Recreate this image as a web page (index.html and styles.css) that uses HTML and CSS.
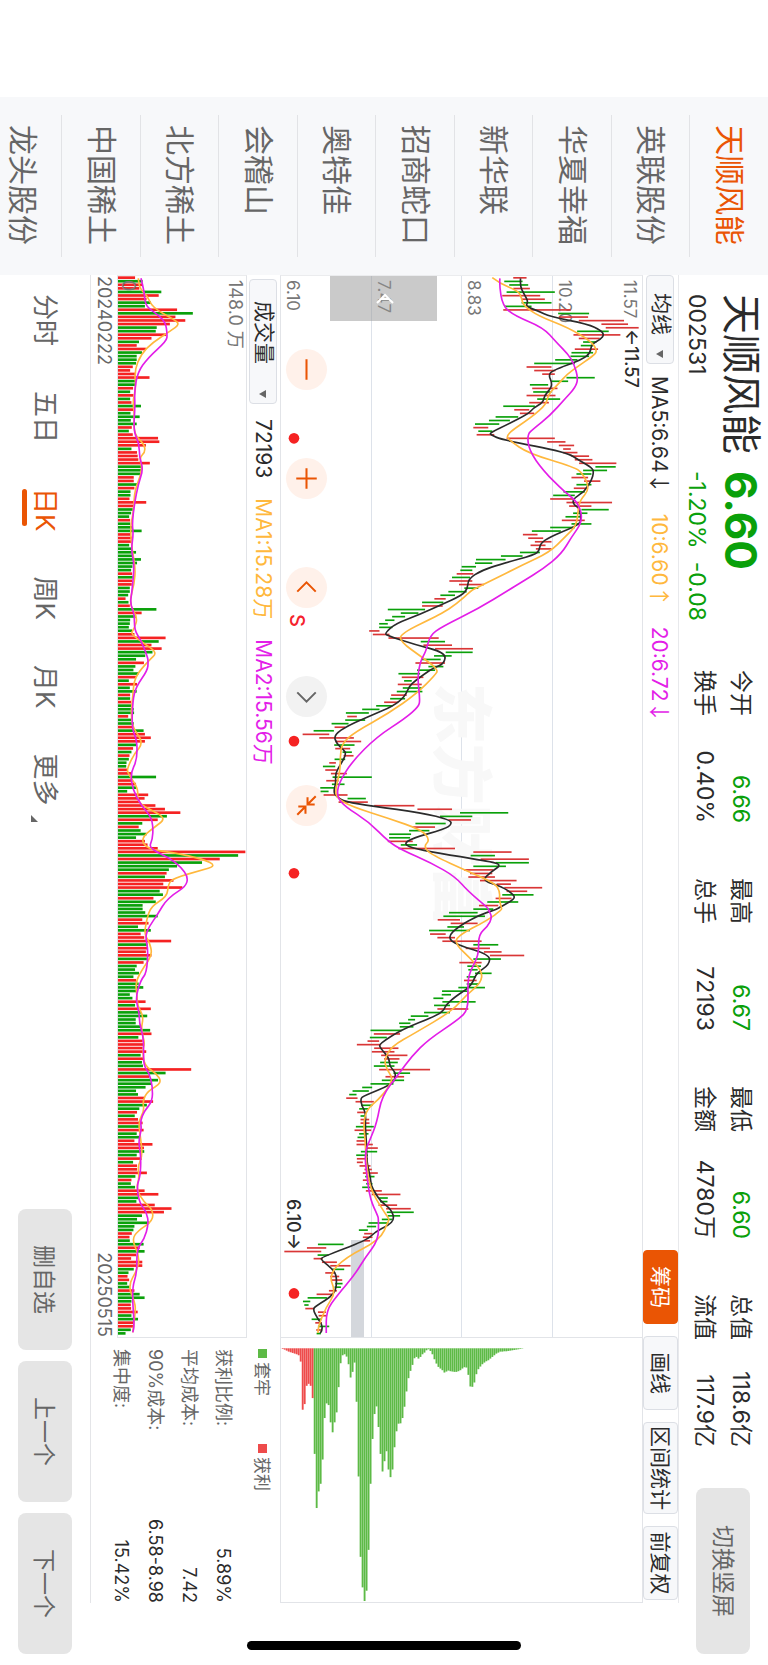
FILE: index.html
```
<!DOCTYPE html>
<html lang="zh-CN">
<head>
    <meta charset="UTF-8">
    <meta name="viewport" content="width=device-width, initial-scale=1.0">
    <title>天顺风能 002531</title>
    <link rel="stylesheet" href="styles.css">
</head>
<body>
    <div class="screen">
        <nav class="stock-list">
            <ul>
                <li><a href="#" class="active">天顺风能</a></li>
                <li><a href="#">英联股份</a></li>
                <li><a href="#">华夏幸福</a></li>
                <li><a href="#">新华联</a></li>
                <li><a href="#">招商蛇口</a></li>
                <li><a href="#">奥特佳</a></li>
                <li><a href="#">会稽山</a></li>
                <li><a href="#">北方稀土</a></li>
                <li><a href="#">中国稀土</a></li>
                <li><a href="#">龙头股份</a></li>
            </ul>
        </nav>

        <main class="main">
            <header class="header">
                <div class="quote">
                    <h1>天顺风能</h1>
                    <strong class="price">6.60</strong>
                    <span class="code">002531</span>
                    <span class="change"><span>-1.20%</span><span>-0.08</span></span>
                </div>
                <div class="stats">
                    <dl>
                        <dt>今开</dt><dd class="down">6.66</dd>
                        <dt>换手</dt><dd>0.40%</dd>
                    </dl>
                    <dl>
                        <dt>最高</dt><dd class="down">6.67</dd>
                        <dt>总手</dt><dd>72193</dd>
                    </dl>
                    <dl>
                        <dt>最低</dt><dd class="down">6.60</dd>
                        <dt>金额</dt><dd>4780万</dd>
                    </dl>
                    <dl>
                        <dt>总值</dt><dd>118.6亿</dd>
                        <dt>流值</dt><dd>117.9亿</dd>
                    </dl>
                </div>
                <button class="btn btn-rotate">切换竖屏</button>
            </header>

            <section class="charts">
                <div class="toolbar">
                    <label class="picker">
                        <select aria-label="主图指标"><option>均线</option></select>
                    </label>
                    <div class="values">
                        <span>MA5:6.64<i>↓</i></span>
                        <span class="orange">10:6.60<i>↑</i></span>
                        <span class="purple">20:6.72<i>↓</i></span>
                    </div>
                    <div class="tools">
                        <button class="tool active">筹码</button>
                        <button class="tool">画线</button>
                        <button class="tool">区间统计</button>
                        <button class="tool">前复权</button>
                    </div>
                </div>

                <div class="kline">
                    <div class="grid">
                        <div><span>11.57</span><span>10.20</span></div>
                        <div><span>8.83</span></div>
                        <div><span>7.47</span></div>
                        <div><span>6.10</span></div>
                    </div>
                    <div class="watermark">东方财富</div>
                    <div class="gap-zone"></div>
                    <div class="controls">
                        <button aria-label="缩小"><svg viewBox="0 0 40 40"><path d="M10 20h20"/></svg></button>
                        <button aria-label="放大"><svg viewBox="0 0 40 40"><path d="M10 20h20M20 10v20"/></svg></button>
                        <button aria-label="左移"><svg viewBox="0 0 40 40"><path d="M24 11l-9 9 9 9"/></svg></button>
                        <button aria-label="右移" class="grey"><svg viewBox="0 0 40 40"><path d="M16 11l9 9-9 9"/></svg></button>
                        <button aria-label="收起"><svg viewBox="0 0 40 40"><path d="M11 11l8 8M19 12v7h-7M29 29l-8-8M21 28v-7h7"/></svg></button>
                    </div>
                    <svg class="plot" id="kline" viewBox="0 0 3189 1085" preserveAspectRatio="none"></svg>
                    <button class="handle" aria-label="展开"><svg viewBox="0 0 16 18"><path d="M12 1L4 9l8 8M8 5v8"/></svg></button>
                    <span class="mark mark-high">←11.57</span>
                    <span class="mark mark-low">6.10→</span>
                    <span class="mark mark-sell">S</span>
                </div>

                <div class="chips">
                    <svg class="plot" id="chips" viewBox="0 0 795 1085" preserveAspectRatio="none"></svg>
                </div>

                <div class="toolbar volume-bar">
                    <label class="picker picker-wide">
                        <select aria-label="副图指标"><option>成交量</option></select>
                    </label>
                    <div class="values">
                        <span>72193</span>
                        <span class="orange">MA1:15.28万</span>
                        <span class="purple">MA2:15.56万</span>
                    </div>
                </div>

                <div class="legend">
                    <span class="trapped">套牢</span>
                    <span class="profit">获利</span>
                </div>

                <div class="volume">
                    <svg class="plot" id="volume" viewBox="0 0 3189 390" preserveAspectRatio="none"></svg>
                    <span class="vol-max">148.0 万</span>
                    <span class="vol-min">0</span>
                </div>

                <dl class="chip-info">
                    <dt>获利比例:</dt><dd>5.89%</dd>
                    <dt>平均成本:</dt><dd>7.42</dd>
                    <dt>90%成本:</dt><dd>6.58-8.98</dd>
                    <dt>集中度:</dt><dd>15.42%</dd>
                </dl>

                <div class="dates"><span>20240222</span><span>20250515</span></div>
            </section>

            <footer class="footer">
                <nav class="periods">
                    <a href="#">分时</a>
                    <a href="#">五日</a>
                    <a href="#" class="active">日K</a>
                    <a href="#">周K</a>
                    <a href="#">月K</a>
                    <a href="#" class="more">更多</a>
                </nav>
                <div class="actions">
                    <button class="btn">删自选</button>
                    <button class="btn">上一个</button>
                    <button class="btn">下一个</button>
                </div>
            </footer>
        </main>

        <div class="home-indicator"></div>
    </div>
    <script src="script.js"></script>
</body>
</html>
```
FILE: styles.css
```
* {
    box-sizing: border-box;
    margin: 0;
    padding: 0;
}

html, body {
    height: 100%;
    overflow: hidden;
    background: #fff;
}

body, button, select {
    font-family: Inter, "Noto Sans CJK SC", sans-serif;
    color: #2b2b2b;
}

button {
    border: none;
    cursor: pointer;
}

a {
    color: #666;
    text-decoration: none;
}

/* 横屏页面，顺时针转 90 度显示 */
.screen {
    position: relative;
    display: flex;
    width: 100vh;
    height: 100vw;
    padding-left: 97px;
    transform: translateX(100vw) rotate(90deg);
    transform-origin: 0 0;
}

/* 左侧股票列表 */
.stock-list {
    flex: 0 0 178px;
    background: #f7f8fa;
    overflow: hidden;
}

.stock-list ul {
    display: grid;
    grid-template-rows: repeat(9, 9fr) 7fr;
    height: 100%;
    padding: 0 18px;
    list-style: none;
}

.stock-list li {
    min-height: 0;
    padding: 17px 0 0 10px;
    border-bottom: 1px solid #e2e3e6;
    font-size: 30px;
    line-height: 42px;
    white-space: nowrap;
}

.stock-list li:last-child {
    border-bottom: none;
}

.stock-list .active {
    color: #ea5504;
}

.main {
    flex: 1;
    min-width: 0;
    display: flex;
    flex-direction: column;
}

/* 顶部行情 */
.header {
    flex: 0 0 89px;
    display: flex;
    align-items: center;
    padding: 0 11px 0 19px;
    font-size: 23px;
}

.quote {
    display: grid;
    grid-template-columns: 160px auto;
    grid-template-rows: 44px 40px;
    column-gap: 17px;
    align-items: center;
    align-self: flex-start;
    flex: 0 0 376px;
    justify-content: start;
    padding-top: 5px;
    line-height: 36px;
}

.quote h1 {
    font-size: 40px;
    font-weight: 400;
    line-height: 40px;
    white-space: nowrap;
}

.price {
    font-size: 44px;
    color: #0aa00a;
}

.code, .change {
    align-self: end;
}

.change {
    display: flex;
    gap: 13px;
    color: #0aa00a;
}

.stats {
    flex: 1;
    display: flex;
    gap: 55px;
}

.stats dl {
    flex: 0 0 153px;
    display: grid;
    grid-template-columns: auto 1fr;
    line-height: 36px;
}

.stats dd {
    text-align: right;
}

.down {
    color: #0aa00a;
}

.btn {
    width: 141px;
    height: 54px;
    padding-bottom: 3px;
    border-radius: 8px;
    background: #e5e5e5;
    color: #666;
    font-size: 23px;
}

.btn-rotate {
    width: 166px;
}

/* 图表区 */
.charts {
    flex: 1;
    min-height: 0;
    margin-right: 62px;
    display: grid;
    grid-template-columns: 1fr 265px;
    grid-template-rows: 36px 363fr 33px 130fr 26px;
    border-bottom: 1px solid #e4e5e8;
}

.toolbar {
    display: flex;
    align-items: center;
    font-size: 21px;
}

.toolbar:first-child {
    grid-column: 1 / 3;
    border-top: 1px solid #e8e9ec;
    padding-right: 3px;
}

.picker {
    position: relative;
    width: 89px;
    height: 28px;
}

.picker select {
    width: 100%;
    height: 100%;
    padding: 0 0 2px 17px;
    appearance: none;
    border: 1px solid #dcdfe5;
    border-radius: 4px;
    background: #f7f8fa;
    font-size: 21px;
    line-height: 24px;
}

.picker::after {
    content: "";
    position: absolute;
    right: 6px;
    top: 11px;
    border: 4px solid transparent;
    border-top: 7px solid #666;
    border-bottom: none;
}

.volume-bar {
    padding-left: 4px;
}

.picker-wide {
    width: 125px;
}

.picker-wide select {
    padding-left: 21px;
}

.values {
    display: flex;
    gap: 24px;
    margin-left: 12px;
    line-height: 28px;
    white-space: nowrap;
}

.volume-bar .values {
    gap: 20px;
    margin-left: 15px;
}

.values i {
    font-family: "Noto Sans CJK SC", sans-serif;
    font-style: normal;
    display: inline-block;
    width: 17px;
}

.orange {
    color: #ffb83d;
}

.purple {
    color: #e31ee8;
}

.tools {
    display: flex;
    gap: 12px;
    margin-left: auto;
}

.tool {
    min-width: 74px;
    height: 35px;
    padding: 0 3px 3px;
    border: 1px solid #dcdfe5;
    border-radius: 4px;
    background: #f7f8fa;
    font-size: 21px;
}

.tool.active {
    border-color: #ea5504;
    background: #ea5504;
    color: #fff;
}

.kline, .volume, .chips {
    position: relative;
    border: 1px solid #e2e4e8;
}

.kline, .volume {
    border-left-color: #ebecee;
}

.chips {
    border-left: none;
}

.plot {
    position: absolute;
    left: 0;
    top: 0;
    width: 100%;
    height: 100%;
    pointer-events: none;
}

.grid {
    height: 100%;
    display: grid;
    grid-template-rows: repeat(4, 1fr);
    color: #777;
    font-size: 17px;
    line-height: 24px;
}

.grid div {
    display: flex;
    flex-direction: column;
    justify-content: flex-end;
    padding-left: 4px;
    border-bottom: 1px solid #dde2ea;
}

.grid div:first-child {
    justify-content: space-between;
}

.grid div:last-child {
    border-bottom: none;
}

.watermark {
    position: absolute;
    left: 407px;
    top: 150px;
    font-size: 61px;
    font-weight: 900;
    line-height: 62px;
    color: #f8f8f8;
}

.gap-zone {
    position: absolute;
    right: 0;
    top: 278px;
    width: 97px;
    height: 13px;
    background: #d4d7dc;
}

.controls {
    position: absolute;
    left: 73px;
    bottom: 5px;
    display: flex;
    gap: 68px;
}

.controls button {
    width: 41px;
    height: 41px;
    border-radius: 50%;
    background: #fff1ea;
}

.controls svg {
    display: block;
    fill: none;
    stroke: #ea5504;
    stroke-width: 2;
}

.controls .grey {
    background: #f2f2f2;
}

.controls .grey svg {
    stroke: #666;
}

.handle {
    position: absolute;
    left: 0;
    top: 205px;
    width: 45px;
    height: 107px;
    background: rgba(150, 150, 150, 0.5);
}

.handle svg {
    width: 16px;
    height: 18px;
    fill: none;
    stroke: #fff;
    stroke-width: 2;
}

.mark {
    position: absolute;
    font-size: 18px;
    font-weight: 500;
    line-height: 22px;
}

.mark-high {
    left: 53px;
    top: 0;
}

.mark-low {
    left: 923px;
    bottom: 1px;
}

.mark-sell {
    left: 338px;
    bottom: 5px;
    font-size: 20px;
    color: #f5222d;
}

.legend {
    display: flex;
    align-items: center;
    gap: 48px;
    padding-left: 11px;
    font-size: 17px;
    color: #666;
}

.legend span::before {
    content: "";
    display: inline-block;
    width: 9px;
    height: 9px;
    margin-right: 4px;
    vertical-align: 2px;
    background: #5dba46;
}

.legend .profit::before {
    background: #ee4b4b;
}

.vol-max, .vol-min {
    position: absolute;
    left: 4px;
    font-size: 18px;
    line-height: 20px;
    color: #777;
}

.vol-max {
    top: 1px;
}

.vol-min {
    bottom: 0;
}

.chip-info {
    grid-row: 4 / 6;
    grid-column: 2;
    display: grid;
    grid-template-columns: auto 1fr;
    align-content: start;
    padding: 7px 0 0 11px;
    font-size: 18px;
    line-height: 34px;
}

.chip-info dt {
    color: #666;
}

.chip-info dd {
    text-align: right;
}

.dates {
    grid-row: 5;
    display: flex;
    justify-content: space-between;
    padding: 0 1px;
    font-size: 18px;
    line-height: 25px;
    color: #666;
}

/* 底部 */
.footer {
    flex: 0 0 90px;
    display: flex;
    align-items: center;
    justify-content: space-between;
    padding: 0 11px 0 19px;
}

.periods {
    display: flex;
    gap: 45px;
    font-size: 26px;
}

.periods a {
    position: relative;
    line-height: 36px;
}

.periods .active {
    color: #ea5504;
}

.periods .active::after {
    content: "";
    position: absolute;
    left: 1px;
    right: 6px;
    bottom: -5px;
    height: 5px;
    border-radius: 3px;
    background: #ea5504;
}

.periods .more::after {
    content: "";
    position: absolute;
    right: -16px;
    bottom: 4px;
    border-left: 7px solid transparent;
    border-bottom: 7px solid #666;
}

.actions {
    display: flex;
    gap: 11px;
}

.home-indicator {
    position: absolute;
    right: 15px;
    top: 247px;
    bottom: 247px;
    width: 9px;
    border-radius: 5px;
    background: #000;
}
```
FILE: script.js
```
// 每根K线: 低-高 + 颜色 (r 涨, g 跌)
const candles = `775-815r 748-803g 763-820g 775-825r 755-900g 742-856r 800-870r 800-890g 748-830g 745-948r
910-1003g 912-1000r 972-1108r 1040-1120r 1053-1152r 967-1062g 956-1097r 972-1035r 985-1025g 978-1015g
960-1030r 950-1015g 947-1003g 901-968g 838-960g 815-890r 838-902r 862-900r 935-1020g 890-940g
825-880g 832-908r 835-890g 815-902r 847-916g 823-882r 745-840g 778-823r 795-838r 722-790g
702-765g 660-733g 655-700r 670-712g 665-718r 755-900r 877-932r 912-958r 925-948r 925-968r
950-1003r 960-1013r 973-1085r 1022-1083g 985-1057g 965-1010g 950-1000r 988-1037r 965-1010g 957-1000r
926-990g 895-960g 886-955r 935-1072r 943-1010r 980-1062g 955-998g 932-980g 921-990r 950-1010g
886-960g 831-918g 804-848r 820-865r 840-890r 827-872r 843-890r 795-855g 738-803g 663-752g
660-712g 620-663g 616-652g 605-655r 591-645g 583-652r 612-687r 628-670g 580-635g 556-600g
538-572r 501-565g 501-563r 398-510g 437-490g 411-450g 390-418g 372-398g 372-412g 342-373r
353-403r 400-551r 497-570g 505-591r 540-654r 572-653g 537-590g 500-557g 481-570r 520-565g
486-540g 430-495g 440-505r 447-470g 428-500r 443-500g 425-502g 408-455r 405-450g 387-430r
363-412g 321-373g 272-341g 276-305r 270-330g 229-280g 238-270r 175-236g 142-222r 192-296r
240-318r 237-298g 240-285r 262-290g 265-295r 238-270g 222-242r 203-240g 210-245r 227-275r
232-350g 213-250r 230-268g 195-240g 196-220g 205-277r 277-332g 250-338r 357-478r 487-591r
615-760g 555-652g 580-648r 481-572g 472-540r 462-523g 402-468g 402-465g 398-473r 437-486g
430-600r 655-770r 647-720g 677-822r 722-822g 655-753g 627-715r 645-712r 640-720r 675-785r
725-768r 748-862r 755-817r 742-836g 722-770r 697-790g 672-730r 655-715g 582-668g 565-690g
548-615r 587-668r 577-627g 522-645g 525-572r 547-600r 562-680r 655-730g 632-705r 687-740r
705-808r 655-738g 613-680r 637-678g 640-668g 660-710g 635-662g 627-665r 635-672g 610-690g
561-640g 560-588g 535-565g 562-662g 537-585g 547-640r 507-585g 467-520g 459-480g 432-466g
434-475g 346-440g 356-435r 344-395g 337-372r 305-378r 357-430r 350-418r 378-457r 387-433r
375-428g 356-418g 372-525r 415-465g 391-447r 380-447g 346-415g 321-351g 292-341g 282-304g
273-307r 301-356r 318-352g 312-340g 306-330r 316-332g 316-342r 316-343r 302-356g 298-348r
312-340g 307-330g 304-330r 304-353r 330-368r 317-366g 303-338g 305-338r 305-323r 313-346r
328-350r 323-368r 330-358g 323-345r 333-352g 321-350g 332-380r 350-436r 372-398g 375-397g
370-426r 393-467r 395-476g 398-435g 380-412g 340-400g 335-363g 311-338g 327-352r 323-352r
325-345r 188-265g 155-213r 87-198r 187-220g 175-203r 200-245r 225-286r 232-267g 210-240r
225-252r 230-261r 240-262g 238-257g 221-245r 184-235r 157-215g 143-165g 147-160g 150-178r
188-212r 190-213r 169-200g 180-200r 188-222g 183-197r 184-197g`;

const volumes = `402r 425g 425r 415r 482g 474r 437r 450g 432g 530r 578g 525r 555r 508r 468g 465g 497r 452r 414g 407r
435r 423g 407g 407g 405g 395r 387r 405r 446r 405g 403g 396r 387g 397r 387g 391r 420g 400r 388g 416g
389g 407g 392r 383g 395r 472r 476r 435r 391g 408r 410r 412r 447r 423g 423g 420g 398r 398r 408g 400r
388g 388g 385r 436r 398r 395g 390g 384g 387r 387g 395g 422g 387r 393r 392r 384g 392g 405g 398g 420g
408g 394g 390g 393r 395g 393r 392r 386g 386g 381g 373r 382g 386r 467g 422r 405g 387g 386g 383g 393g
400r 495r 474g 452r 483r 455g 433g 405g 429r 403g 397g 412g 405r 383g 408r 386g 407g 387r 387g 390r
391g 398g 399g 381r 390g 398g 395r 428g 432r 450r 432r 405g 396r 391g 385r 383g 376g 375g 378r 391r
466g 395r 405r 405g 378g 442r 431r 415r 464r 493r 540r 499g 471r 424g 413r 419g 437g 405g 432r 440r
471r 738r 716g 660r 606g 530g 505g 498r 493g 519r 488r 546r 477g 487g 458r 465g 425g 425g 433g 471g
424r 443r 411g 450g 419r 430r 512r 440g 440r 435r 452r 438g 428r 407g 402g 414g 397g 405r 413g 427g
405g 386g 394g 434r 402g 450r 420g 439g 404g 404g 422g 448g 452r 412g 425r 430r 425r 436r 419g 428r
423g 426g 573r 495g 445r 472g 452g 434g 405g 411g 432r 457r 438g 415g 408r 401g 411r 425r 418g 428r
407g 415g 400r 455r 429r 430g 407g 422r 396g 408r 408r 438r 403g 391r 389g 402g 431r 473r 411g 406g
462r 513r 490r 423g 408g 445g 400g 397g 392r 385r 386g 428g 416r 431g 405r 390r 424r 424r 398g 382g
379r 384r 378g 385g 400r 416g 431g 391g 389r 390r 410r 391g 411g 397r 398r 389g 373g`;

// 均线: 每段 [横向偏移, '值,位置 ...']
const ma5 = [
    [-15, '797,22 795,45 808,70 820,92 812,106 850,120 885,137 1000,160 1038,178 1048,192 1038,205 1010,220 1007,245 985,265 890,300 882,315 890,332 890,350 868,375 865,395 835,412 822,428 760,460 708,485 705,492 745,508 935,545 975,570 1012,592 1017,605 1010,630 993,655 985,665 955,685 955,700 975,715 978,740 978,755 960,768 885,800 857,818 853,840 840,853 740,880 680,900 640,925 638,955'],
    [945, '620,15 560,42 500,70 420,100 390,128 395,135 480,163 572,187 568,220 535,233 510,250 480,272 462,288 450,318 415,347 350,375 280,405 235,435 245,462 265,478 273,492 258,520 240,550 242,580 235,605 243,620 270,635 350,648 500,668 585,690 590,703 570,717 470,745 445,763 480,777 580,795 720,817 737,827 710,845 680,872 740,890 778,915 778,928 740,950'],
    [1905, '720,0 670,17 610,50 577,83 605,105 705,135 703,165 665,190 655,215 640,235 595,265 570,290 568,300 545,318 440,360 372,403 375,415 402,445 403,470 420,487 421,505 410,525 325,560 316,567 320,590 332,610 330,650 334,700 335,760 345,800 348,830 360,850 375,875 408,900 418,930 400,948 360,968'],
    [2835, '335,63 198,115 198,122 238,155 245,180 240,225 180,262 173,272 188,300 201,318 200,335 195,342']
];
const ma10 = [
    [-15, '712,20 735,38 790,60 800,80 805,103 850,135 940,170 1010,212 1028,240 1015,255 965,290 935,312 915,335 880,370 875,400 830,440 752,492 765,510 820,548 960,590 985,610 1005,655 975,690 970,720 965,765 930,800 885,845 800,885 710,930 660,955'],
    [945, '650,0 605,40 560,70 435,130 437,155 500,200 550,238 540,255 485,310 400,370 300,425 260,460 255,500 255,540 240,600 245,625 290,650 400,685 500,720 525,750 505,770 530,795 640,845 720,880 735,905 733,930 740,955'],
    [1905, '740,0 700,30 605,80 603,105 645,145 682,185 678,220 635,255 590,305 480,370 410,410 387,450 395,480 413,505 400,535 370,570 335,600 325,640 330,690 333,760 345,840 385,905 402,930'],
    [2835, '400,5 375,62 270,115 220,168 242,220 212,265 190,320 188,342']
];
const ma20 = [
    [-15, '735,22 733,40 743,105 780,135 865,170 905,215 940,250 958,280 970,322 962,350 930,385 885,435 835,475 817,492 823,540 865,600 930,665 970,695 985,750 950,800 920,850 865,895 800,935'],
    [945, '760,0 670,55 560,110 525,135 512,185 497,210 487,260 495,330 490,350 450,385 365,440 290,515 250,580 245,620 270,650 340,695 400,755 440,780 530,820 600,860 640,905 700,955'],
    [1905, '700,0 712,22 698,50 670,75 672,135 645,185 638,220 640,300 610,330 520,390 470,440 430,495 380,560 365,640 345,690 328,730 335,800 345,870 368,920'],
    [2835, '370,0 370,62 330,115 300,165 245,230 213,275 213,342']
];
const volMa1 = [
    [-15, '412,22 413,50 440,75 455,110 520,145 538,160 510,180 455,215 420,250 400,300 405,350 395,390 400,430 398,490 430,520 433,545 415,560 425,600 400,660 398,720 387,770 393,840 403,890 400,940 383,1000 410,1040 400,1075 388,1090 430,1120 470,1147'],
    [1155, '445,0 400,50 395,110 390,150 393,200 428,248 400,280 378,325 380,340 412,385 408,420 430,440 480,465 490,480 470,495 418,535 440,568 520,578 610,598 650,618 600,632 520,655 503,672 500,710 450,740 437,780 430,825 445,845 455,885 430,920 403,965 408,1010 410,1040 428,1070 420,1110 432,1150'],
    [2325, '425,0 430,48 465,70 485,100 440,125 425,155 430,185 412,215 418,260 425,320 410,350 415,385 405,420 430,460 455,480 457,515 410,545 392,572 415,620 410,660 380,710 402,760 403,790 395,850']
];
const volMa2 = [
    [-15, '420,22 430,60 433,105 470,130 495,155 500,190 498,210 440,262 410,305 400,360 402,410 397,480 415,520 415,560 427,595 412,640 400,700 393,760 397,790 390,840 400,880 393,960 387,1000 400,1030 400,1080 420,1110 440,1160'],
    [1155, '442,5 440,30 405,80 395,120 392,205 408,240 408,300 388,340 395,390 420,435 450,470 457,500 455,540 443,565 530,605 575,668 500,715 470,765 445,800 433,830 442,870 437,940 420,960 403,1015 415,1060 415,1090 427,1130'],
    [2325, '428,0 428,48 445,70 455,110 455,155 430,185 418,215 422,240 412,275 420,320 418,380 407,410 415,460 438,490 443,525 430,570 407,600 408,670 392,720 400,830 395,850']
];

// 筹码分布, 从最低价到最高价
const chipData = [2, 4, 7, 10, 12, 14, 16, 18, 21, 40, 185, 168, 113, 107, 113, 150, 318, 481, 431, 408, 335, 210, 166, 171, 223,
    253, 223, 193, 117, 45, 21, 18, 25, 48, 88, 71, 43, 161, 386, 628, 720, 761, 730, 607, 408, 273, 198, 175, 237, 318,
    371, 340, 310, 365, 388, 365, 298, 250, 227, 226, 210, 176, 130, 90, 68, 50, 30, 26, 31, 26, 18, 13, 6, 3, 8, 18, 33,
    46, 56, 61, 66, 73, 70, 67, 69, 70, 71, 71, 69, 66, 61, 57, 58, 80, 115, 116, 103, 78, 63, 55, 48, 43, 39, 36, 31, 26,
    21, 16, 13, 10, 10, 9, 9, 8, 7, 6, 5, 4, 3, 2, 1];

const STEP = 10.72;
const klineSvg = document.getElementById('kline');
const volumeSvg = document.getElementById('volume');
const chipsSvg = document.getElementById('chips');

function add(svg, tag, attrs) {
    const el = document.createElementNS('http://www.w3.org/2000/svg', tag);
    for (const key in attrs) {
        el.setAttribute(key, attrs[key]);
    }
    svg.appendChild(el);
}

function drawLine(svg, segments, top, color) {
    const pts = [];
    segments.forEach(([offset, text]) => {
        text.split(' ').forEach(pair => {
            const [value, pos] = pair.split(',').map(Number);
            pts.push([pos + offset, top - value]);
        });
    });
    // 用中点做二次曲线, 让均线平滑
    let d = 'M' + pts[0];
    for (let i = 1; i < pts.length - 1; i++) {
        const mx = (pts[i][0] + pts[i + 1][0]) / 2;
        const my = (pts[i][1] + pts[i + 1][1]) / 2;
        d += 'Q' + pts[i] + ' ' + mx + ',' + my;
    }
    d += 'L' + pts[pts.length - 1];
    add(svg, 'path', { d: d, fill: 'none', stroke: color, 'stroke-width': 5 });
}

candles.split(/\s+/).forEach((item, i) => {
    const [, low, high, dir] = item.match(/(\d+)-(\d+)([rg])/);
    add(klineSvg, 'rect', {
        x: 3 + i * STEP, y: 1162 - high, width: 5, height: high - low,
        fill: dir === 'r' ? '#d93636' : '#0aa00a'
    });
});
drawLine(klineSvg, ma5, 1162, '#2b2b2b');
drawLine(klineSvg, ma10, 1162, '#ffb83d');
drawLine(klineSvg, ma20, 1162, '#e31ee8');
[488, 1398, 1795, 3058].forEach(x => {
    add(klineSvg, 'circle', { cx: x, cy: 1046, r: 16, fill: '#f52222' });
});

volumes.split(/\s+/).forEach((item, i) => {
    const height = parseInt(item) - 350;
    add(volumeSvg, 'rect', {
        x: 1 + i * STEP, y: 390 - height, width: 8, height: height,
        fill: item.endsWith('r') ? '#f52222' : '#0aa00a'
    });
});
drawLine(volumeSvg, volMa1, 740, '#ffb83d');
drawLine(volumeSvg, volMa2, 740, '#e31ee8');

chipData.forEach((value, i) => {
    add(chipsSvg, 'rect', {
        x: 31, y: 1077 - i * 6, width: value, height: 5.6,
        fill: i < 16 ? '#ee4b4b' : '#5dba46'
    });
});
```
